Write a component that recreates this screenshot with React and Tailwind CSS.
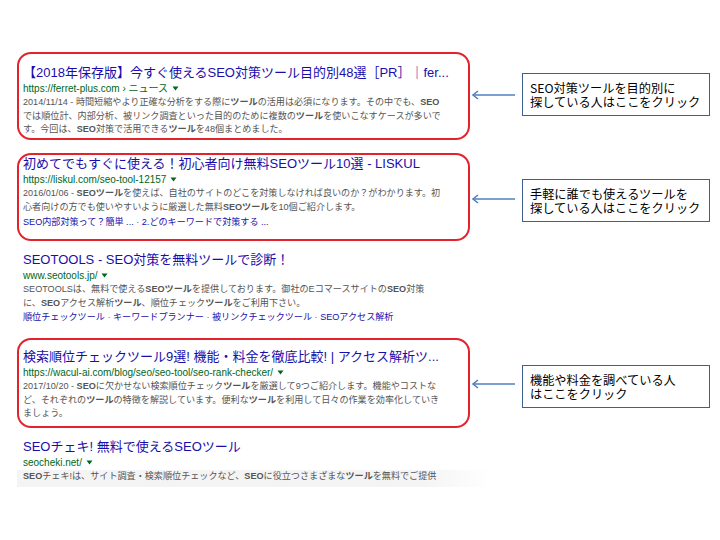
import React from "react";

const FONT = { fontFamily: '"Liberation Sans", "Noto Sans CJK JP", sans-serif' };

function Tri() {
  return (
    <svg width="7" height="5" viewBox="0 0 7 5" className="inline-block ml-[4px] mb-[1px]">
      <path d="M0.5 0.5 L6.5 0.5 L3.5 4.5 Z" fill="#006621" />
    </svg>
  );
}

function Arrow() {
  return (
    <svg width="45" height="10" viewBox="0 0 45 10" className="shrink-0">
      <path d="M44 5 L2 5" stroke="#4f7fc0" strokeWidth="1.6" fill="none" />
      <path d="M7 1 L2 5 L7 9" stroke="#4f7fc0" strokeWidth="1.6" fill="none" />
    </svg>
  );
}

function Callout({ lines, mt }) {
  return (
    <div
      className={`ml-[6px] w-[188px] h-[43px] border border-[#3f5f8c] bg-white pl-[7px] flex flex-col justify-center text-[12.2px] leading-[14px] text-black ${mt}`}
      style={{ fontFamily: '"Noto Sans CJK JP", sans-serif' }}
    >
      {lines.map((l, i) => (
        <div key={i} className="whitespace-nowrap">{l}</div>
      ))}
    </div>
  );
}

function Title({ children }) {
  return (
    <div className="h-[16px] leading-[16px] text-[13px] text-[#1a0dab] whitespace-nowrap">{children}</div>
  );
}

function Url({ children }) {
  return (
    <div className="h-[15px] leading-[15px] text-[10px] text-[#006621] whitespace-nowrap flex items-center">
      <span>{children}</span>
      <Tri />
    </div>
  );
}

function Snip({ lines }) {
  return (
    <div className="text-[9.1px] leading-[13.5px] text-[#545454]">
      {lines.map((l, i) => (
        <div key={i} className="whitespace-nowrap">{l}</div>
      ))}
    </div>
  );
}

function Links({ items }) {
  return (
    <div className="h-[14px] leading-[14px] text-[9.1px] text-[#1a0dab] whitespace-nowrap">
      {items.map((t, i) => (
        <React.Fragment key={i}>
          {i > 0 && <span className="text-[#545454]"> · </span>}
          <span>{t}</span>
        </React.Fragment>
      ))}
    </div>
  );
}

const B = ({ children }) => <b className="font-bold text-[#545454]">{children}</b>;

export default function App() {
  return (
    <div className="w-[720px] h-[540px] bg-white overflow-hidden" style={FONT}>
      <div className="pl-[17px] pt-[52px] flex flex-col">
        {/* Row 1 */}
        <div className="flex items-start">
          <div className="w-[453px] h-[88px] border-2 border-[#e3222c] rounded-[14px] pl-[4px] pt-[11px]">
            <Title>【2018年保存版】今すぐ使えるSEO対策ツール目的別48選［PR］｜fer...</Title>
            <Url>https://ferret-plus.com › ニュース</Url>
            <Snip
              lines={[
                <>2014/11/14 - 時間短縮やより正確な分析をする際に<B>ツール</B>の活用は必須になります。その中でも、<B>SEO</B></>,
                <>では順位計、内部分析、被リンク調査といった目的のために複数の<B>ツール</B>を使いこなすケースが多いで</>,
                <>す。今回は、<B>SEO</B>対策で活用できる<B>ツール</B>を48個まとめました。</>,
              ]}
            />
          </div>
          <div className="mt-[38px] ml-[1px]"><Arrow /></div>
          <Callout mt="mt-[21px]" lines={["SEO対策ツールを目的別に", "探している人はここをクリック"]} />
        </div>

        {/* Row 2 */}
        <div className="flex items-start mt-[13px]">
          <div className="w-[453px] h-[88px] border-2 border-[#e3222c] rounded-[14px] pl-[4px] pt-[1px]">
            <Title>初めてでもすぐに使える！初心者向け無料SEOツール10選 - LISKUL</Title>
            <Url>https://liskul.com/seo-tool-12157</Url>
            <Snip
              lines={[
                <>2016/01/06 - <B>SEOツール</B>を使えば、自社のサイトのどこを対策しなければ良いのか？がわかります。初</>,
                <>心者向けの方でも使いやすいように厳選した無料<B>SEOツール</B>を10個ご紹介します。</>,
              ]}
            />
            <div className="mt-[1px]">
              <Links items={["SEO内部対策って？簡単 ...", "2.どのキーワードで対策する ..."]} />
            </div>
          </div>
          <div className="mt-[41px] ml-[1px]"><Arrow /></div>
          <Callout mt="mt-[26px]" lines={["手軽に誰でも使えるツールを", "探している人はここをクリック"]} />
        </div>

        {/* Row 3 */}
        <div className="mt-[11px] pl-[6px]">
          <Title>SEOTOOLS - SEO対策を無料ツールで診断！</Title>
          <Url>www.seotools.jp/</Url>
          <Snip
            lines={[
              <>SEOTOOLSは、無料で使える<B>SEOツール</B>を提供しております。御社のEコマースサイトの<B>SEO</B>対策</>,
              <>に、<B>SEO</B>アクセス解析<B>ツール</B>、順位チェック<B>ツール</B>をご利用下さい。</>,
            ]}
          />
          <Links items={["順位チェックツール", "キーワードプランナー", "被リンクチェックツール", "SEOアクセス解析"]} />
        </div>

        {/* Row 4 */}
        <div className="flex items-start mt-[14px]">
          <div className="w-[453px] h-[90px] border-2 border-[#e3222c] rounded-[14px] pl-[4px] pt-[9px]">
            <Title>検索順位チェックツール9選! 機能・料金を徹底比較! | アクセス解析ツ...</Title>
            <Url>https://wacul-ai.com/blog/seo/seo-tool/seo-rank-checker/</Url>
            <Snip
              lines={[
                <>2017/10/20 - <B>SEO</B>に欠かせない検索順位チェック<B>ツール</B>を厳選して9つご紹介します。機能やコストな</>,
                <>ど、それぞれの<B>ツール</B>の特徴を解説しています。便利な<B>ツール</B>を利用して日々の作業を効率化していき</>,
                <>ましょう。</>,
              ]}
            />
          </div>
          <div className="mt-[41px] ml-[1px]"><Arrow /></div>
          <Callout mt="mt-[27px]" lines={["機能や料金を調べている人", "はここをクリック"]} />
        </div>

        {/* Row 5 */}
        <div className="mt-[11px]">
          <div className="pl-[6px]">
            <Title>SEOチェキ! 無料で使えるSEOツール</Title>
            <Url>seocheki.net/</Url>
          </div>
          <div className="w-[475px] pl-[6px] pb-[3px] bg-[linear-gradient(to_right,#f4f4f4_85%,#ffffff)]">
            <Snip
              lines={[
                <><B>SEO</B>チェキ!は、サイト調査・検索順位チェックなど、<B>SEO</B>に役立つさまざまな<B>ツール</B>を無料でご提供</>,
              ]}
            />
          </div>
        </div>
      </div>
    </div>
  );
}
